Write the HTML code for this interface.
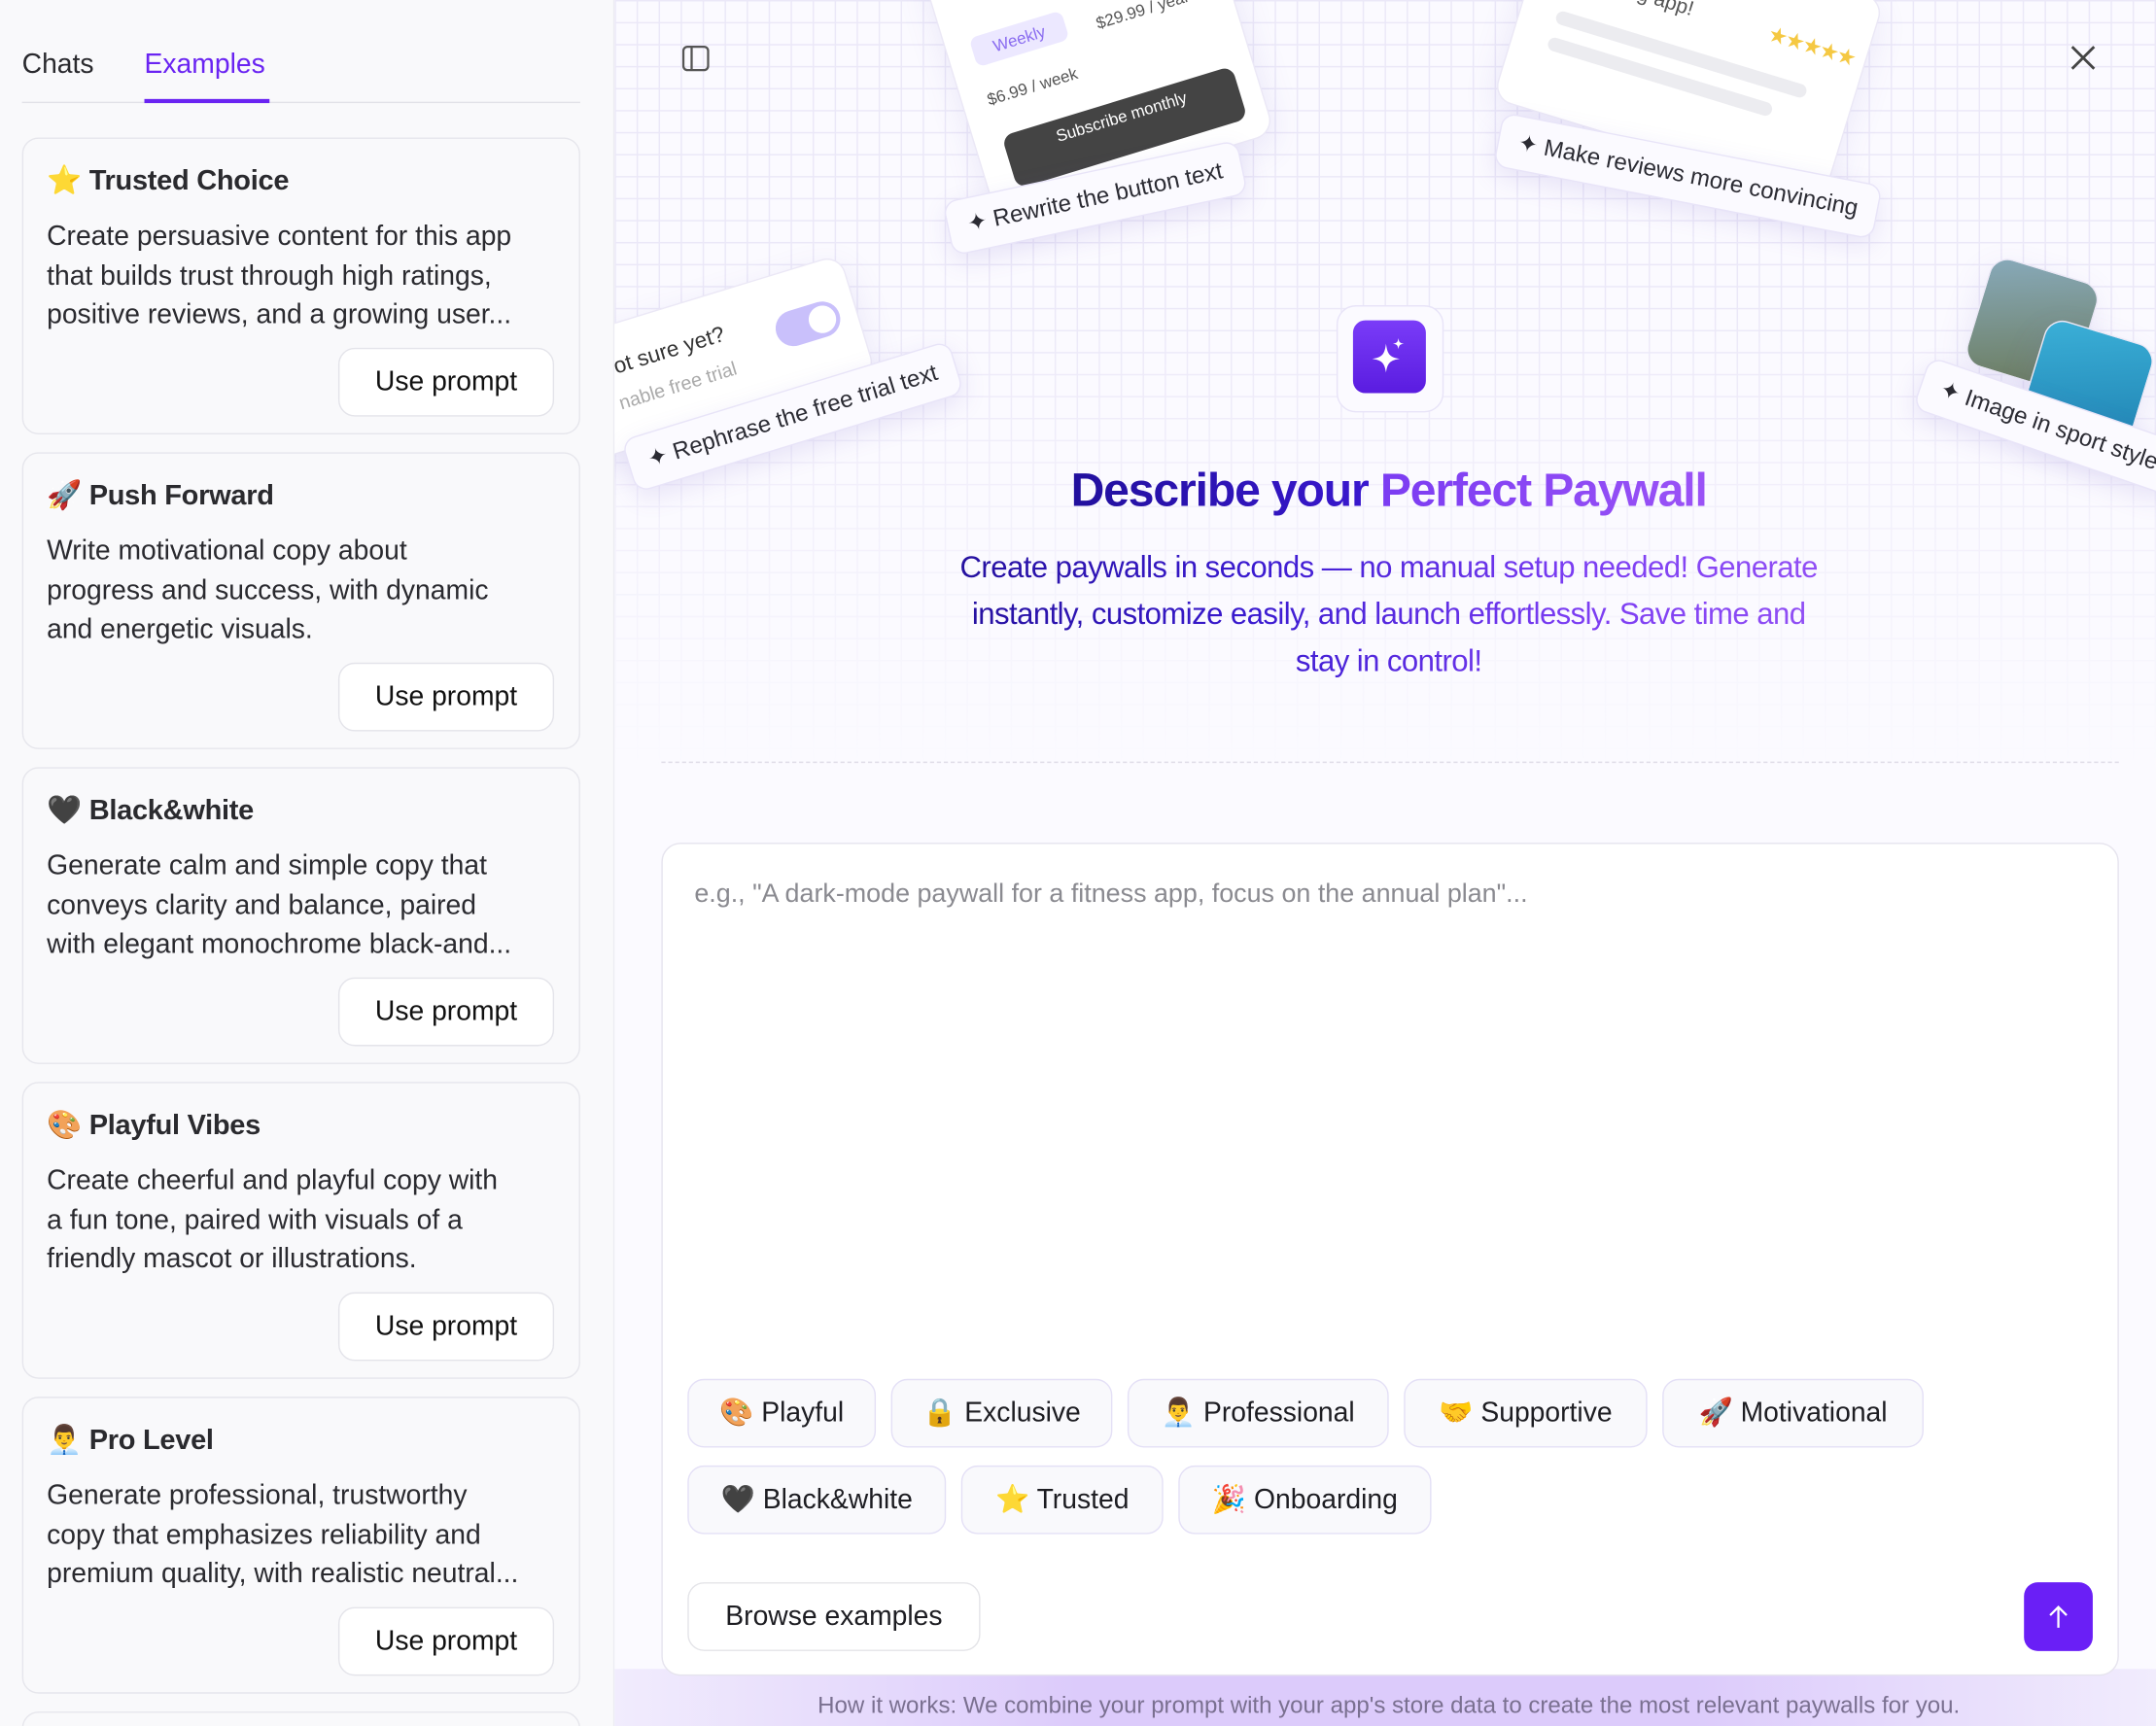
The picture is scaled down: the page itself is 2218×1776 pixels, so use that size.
<!DOCTYPE html>
<html><head><meta charset="utf-8">
<style>
html,body{margin:0;padding:0;width:2218px;height:1776px;overflow:hidden;background:#f9f9fb}
#wrap{position:absolute;left:0;top:0;width:2218px;height:1776px;overflow:hidden}
#s{position:absolute;left:0;top:0;width:1568px;height:1256px;overflow:hidden;transform:scale(1.41454);transform-origin:0 0;font-family:"Liberation Sans","Noto Sans CJK JP",sans-serif;color:#1f1f24}
.side{position:absolute;left:0;top:0;width:446px;height:1256px;background:#f9f9fb;border-right:1px solid #ececf2;overflow:hidden}
.tab{position:absolute;top:36px;font-size:20px}
.card{position:absolute;left:16px;width:404px;height:214px;border:1px solid #e6e6ec;border-radius:12px;background:#f9f9fb}
.card h3{position:absolute;left:17px;top:19px;margin:0;font-size:20.5px;font-weight:bold;color:#2a2a2e;letter-spacing:-0.2px}
.card p{position:absolute;left:17px;top:57px;margin:0;width:385px;white-space:nowrap;font-size:20px;line-height:28.5px;color:#2a2a2f}
.btn{position:absolute;right:18px;bottom:12px;width:155px;height:48px;border:1px solid #e4e4ea;border-radius:12px;background:#fff;font-size:20px;line-height:48px;text-align:center;color:#111}
.main{position:absolute;left:447px;top:0;width:1121px;height:1256px;background:#fbfaff;overflow:hidden}
.grid{position:absolute;left:0;top:0;width:1121px;height:560px;background-image:linear-gradient(#ebe8f8 1px,transparent 1px),linear-gradient(90deg,#ebe8f8 1px,transparent 1px);background-size:16px 16px;-webkit-mask-image:linear-gradient(#000 40%,transparent 100%)}
.fc{position:absolute;background:#fff;border:1px solid #ebe8f6;border-radius:14px;box-shadow:0 8px 24px rgba(110,90,200,.12)}
.pill{position:absolute;background:#fbfaff;border:1px solid #e8e4f8;border-radius:10px;box-shadow:0 6px 18px rgba(110,90,200,.14);font-size:17px;color:#2b2b33;white-space:nowrap;padding:0 14px;height:38px;line-height:38px}
.chip{position:absolute;height:48px;line-height:48px;border:1px solid #e4e0f6;border-radius:12px;background:#f9f9fc;font-size:20px;color:#1d1d22;text-align:center}
.grad{background:linear-gradient(90deg,#24109c 0%,#3a1ad0 35%,#7a3cf2 70%,#9350f5 100%);-webkit-background-clip:text;background-clip:text;color:transparent}
</style></head><body><div id="wrap"><div id="s">
<div class="side">
 <div class="tab" style="left:16px;color:#2a2a2e">Chats</div>
 <div class="tab" style="left:105px;color:#6a24f2">Examples</div>
 <div style="position:absolute;left:16px;top:74px;width:406px;height:1px;background:#e2e2e8"></div>
 <div style="position:absolute;left:105px;top:72px;width:91px;height:3px;background:#6a24f2"></div>
 <div class="card" style="top:100px"><h3>⭐ Trusted Choice</h3><p>Create persuasive content for this app<br>that builds trust through high ratings,<br>positive reviews, and a growing user...</p><div class="btn">Use prompt</div></div>
 <div class="card" style="top:329px"><h3>🚀 Push Forward</h3><p>Write motivational copy about<br>progress and success, with dynamic<br>and energetic visuals.</p><div class="btn">Use prompt</div></div>
 <div class="card" style="top:558px"><h3>🖤 Black&amp;white</h3><p>Generate calm and simple copy that<br>conveys clarity and balance, paired<br>with elegant monochrome black-and...</p><div class="btn">Use prompt</div></div>
 <div class="card" style="top:787px"><h3>🎨 Playful Vibes</h3><p>Create cheerful and playful copy with<br>a fun tone, paired with visuals of a<br>friendly mascot or illustrations.</p><div class="btn">Use prompt</div></div>
 <div class="card" style="top:1016px"><h3>👨‍💼 Pro Level</h3><p>Generate professional, trustworthy<br>copy that emphasizes reliability and<br>premium quality, with realistic neutral...</p><div class="btn">Use prompt</div></div>
 <div class="card" style="top:1245px;height:40px"></div>
</div>
<div class="main">
 <div class="grid"></div>
 <div class="fc" style="left:245px;top:-60px;width:210px;height:190px;transform:rotate(-17deg)">
  <div style="position:absolute;left:18px;top:60px;width:70px;height:22px;background:#ece8ff;border-radius:6px;color:#8a6cf0;font-size:12px;line-height:22px;text-align:center">Weekly</div>
  <div style="position:absolute;left:18px;top:100px;font-size:12px;color:#555">$6.99 / week</div>
  <div style="position:absolute;left:110px;top:70px;font-size:12px;color:#555">$29.99 / year</div>
  <div style="position:absolute;left:20px;top:135px;width:175px;height:40px;background:#444;border-radius:8px;color:#fff;font-size:12px;text-align:center;line-height:24px">Subscribe monthly</div>
 </div>
 <div class="pill" style="left:240px;top:124px;transform:rotate(-12deg)">✦ Rewrite the button text</div>
 <div class="fc" style="left:655px;top:-40px;width:250px;height:150px;transform:rotate(17deg)">
  <div style="position:absolute;left:28px;top:38px;font-size:15px;color:#555">Amazing app!</div>
  <div style="position:absolute;left:178px;top:36px;font-size:13px;color:#f5c842">★★★★★</div>
  <div style="position:absolute;left:26px;top:75px;width:190px;height:10px;background:#ececf0;border-radius:5px"></div>
  <div style="position:absolute;left:26px;top:95px;width:170px;height:10px;background:#ececf0;border-radius:5px"></div>
 </div>
 <div class="pill" style="left:640px;top:108px;transform:rotate(11deg)">✦ Make reviews more convincing</div>
 <div class="fc" style="left:-40px;top:215px;width:220px;height:90px;transform:rotate(-17deg)">
  <div style="position:absolute;left:40px;top:22px;font-size:16px;color:#333">ot sure yet?</div>
  <div style="position:absolute;left:36px;top:48px;font-size:14px;color:#aaa">nable free trial</div>
  <div style="position:absolute;left:160px;top:28px;width:48px;height:26px;background:#c9c0fb;border-radius:13px"><div style="position:absolute;right:3px;top:3px;width:20px;height:20px;border-radius:10px;background:#fff"></div></div>
 </div>
 <div class="pill" style="left:5px;top:283px;transform:rotate(-17deg)">✦ Rephrase the free trial text</div>
 <div class="fc" style="left:990px;top:195px;width:80px;height:80px;transform:rotate(17deg);background:linear-gradient(160deg,#8ab,#6a7a5a)"></div>
 <div class="fc" style="left:1030px;top:240px;width:80px;height:80px;transform:rotate(17deg);background:linear-gradient(160deg,#3bb0d8,#1e80b0)"></div>
 <div class="pill" style="left:945px;top:290px;transform:rotate(19deg)">✦ Image in sport style</div>
 <div style="position:absolute;left:525px;top:222px;width:76px;height:76px;border:1px solid #e8e4f8;border-radius:14px;background:#fbfaff"></div>
 <div style="position:absolute;left:537px;top:233px;width:53px;height:53px;border-radius:9px;background:linear-gradient(#7a3cf8,#5a1ce0)">
  <svg width="53" height="53" viewBox="0 0 53 53"><path d="M24 17 C25 25 27 27 34 28 C27 29 25 31 24 38 C23 31 21 29 14 28 C21 27 23 25 24 17Z" fill="#fff"/><path d="M33 13 C33.5 16 34 16.5 37 17 C34 17.5 33.5 18 33 21 C32.5 18 32 17.5 29 17 C32 16.5 32.5 16 33 13Z" fill="#fff"/></svg>
 </div>
 <svg style="position:absolute;left:49px;top:33px" width="20" height="20" viewBox="0 0 20 20"><rect x="1" y="1" width="18" height="17" rx="3" fill="none" stroke="#555" stroke-width="1.6"/><line x1="7" y1="1" x2="7" y2="18" stroke="#555" stroke-width="1.6"/></svg>
 <svg style="position:absolute;left:1058px;top:32px" width="20" height="20" viewBox="0 0 20 20"><path d="M2 2L18 18M18 2L2 18" stroke="#444" stroke-width="2"/></svg>
 <div style="position:absolute;left:0;width:1126px;top:338px;text-align:center;font-size:34px;font-weight:bold;letter-spacing:-0.8px;background:linear-gradient(90deg,#22109e 336px,#3a18d0 555px,#7b3cf2 556px,#9a52f6 790px);-webkit-background-clip:text;background-clip:text;color:transparent">Describe your Perfect Paywall</div>
 <div class="grad" style="position:absolute;left:238px;width:650px;top:396px;text-align:center;font-size:22px;line-height:34px;letter-spacing:-0.4px">Create paywalls in seconds — no manual setup needed! Generate instantly, customize easily, and launch effortlessly. Save time and stay in control!</div>
 <div style="position:absolute;left:34px;top:554px;width:1060px;border-top:1px dashed #e0dde8"></div>
 <div style="position:absolute;left:0;top:1214px;width:1121px;height:42px;background:linear-gradient(90deg,#f1ecfd,#dccbfb 30%,#dccbfb 70%,#f1ecfd)"></div>
 <div style="position:absolute;left:0;width:1126px;top:1231px;text-align:center;font-size:17px;color:#7a7090">How it works: We combine your prompt with your app's store data to create the most relevant paywalls for you.</div>
 <div style="position:absolute;left:34px;top:613px;width:1058px;height:604px;background:#fff;border:1px solid #e6e4ee;border-radius:14px">
  <div style="position:absolute;left:23px;top:26px;font-size:19px;color:#8a8a90">e.g., "A dark-mode paywall for a fitness app, focus on the annual plan"...</div>
  <div class="chip" style="left:18px;top:389px;width:135px">🎨 Playful</div>
  <div class="chip" style="left:166px;top:389px;width:159px">🔒 Exclusive</div>
  <div class="chip" style="left:338px;top:389px;width:188px">👨‍💼 Professional</div>
  <div class="chip" style="left:539px;top:389px;width:175px">🤝 Supportive</div>
  <div class="chip" style="left:727px;top:389px;width:188px">🚀 Motivational</div>
  <div class="chip" style="left:18px;top:452px;width:186px">🖤 Black&amp;white</div>
  <div class="chip" style="left:217px;top:452px;width:145px">⭐ Trusted</div>
  <div class="chip" style="left:375px;top:452px;width:182px">🎉 Onboarding</div>
  <div class="chip" style="left:18px;top:537px;width:211px;background:#fff;border-color:#e4e4e8">Browse examples</div>
  <div style="position:absolute;left:990px;top:537px;width:50px;height:50px;border-radius:10px;background:#6a1ff6"><svg width="50" height="50" viewBox="0 0 50 50"><path d="M25 33V18M19 24L25 18L31 24" stroke="#fff" stroke-width="1.6" fill="none"/></svg></div>
 </div>
</div>
</div></div></body></html>
